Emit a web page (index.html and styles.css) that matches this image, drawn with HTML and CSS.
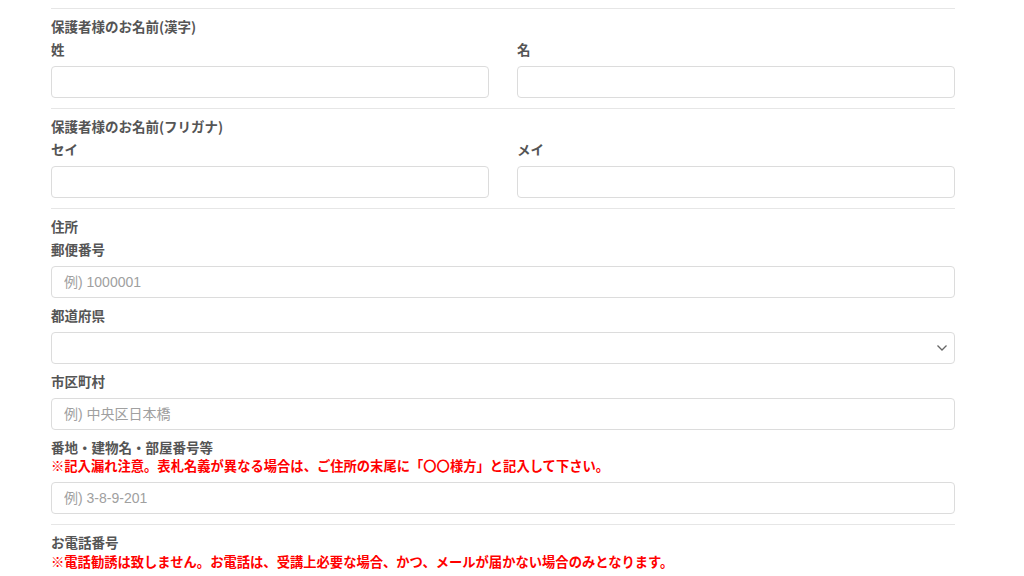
FILE: index.html
```html
<!DOCTYPE html>
<html lang="ja">
<head>
<meta charset="utf-8">
<link rel="stylesheet" href="styles.css">
</head>
<body>
<form class="form">
  <hr class="sep">
  <section class="group">
    <div class="title">保護者様のお名前(漢字)</div>
    <div class="cols">
      <div class="field"><div class="label">姓</div><input class="input" type="text"></div>
      <div class="field"><div class="label">名</div><input class="input" type="text"></div>
    </div>
  </section>
  <hr class="sep">
  <section class="group">
    <div class="title">保護者様のお名前(フリガナ)</div>
    <div class="cols">
      <div class="field"><div class="label">セイ</div><input class="input" type="text"></div>
      <div class="field"><div class="label">メイ</div><input class="input" type="text"></div>
    </div>
  </section>
  <hr class="sep">
  <section class="group">
    <div class="title">住所</div>
    <div class="field"><div class="label">郵便番号</div><input class="input" type="text" placeholder="例) 1000001"></div>
    <div class="field"><div class="label">都道府県</div>
      <div class="select">
        <svg class="chev" width="12" height="8" viewBox="0 0 12 8"><path d="M1.5 1.5 L6 6 L10.5 1.5" fill="none" stroke="#666" stroke-width="1.3"/></svg>
      </div>
    </div>
    <div class="field"><div class="label">市区町村</div><input class="input" type="text" placeholder="例) 中央区日本橋"></div>
    <div class="field"><div class="label label-tight">番地・建物名・部屋番号等</div>
      <div class="note">※記入漏れ注意。表札名義が異なる場合は、ご住所の末尾に「〇〇様方」と記入して下さい。</div>
      <input class="input" type="text" placeholder="例) 3-8-9-201"></div>
  </section>
  <hr class="sep">
  <section class="group">
    <div class="title">お電話番号</div>
    <div class="note">※電話勧誘は致しません。お電話は、受講上必要な場合、かつ、メールが届かない場合のみとなります。</div>
  </section>
</form>
</body>
</html>
```
FILE: styles.css
```css
* { box-sizing: border-box; }
html, body { margin: 0; padding: 0; background: #fff; }
body {
  font-family: "Noto Sans CJK JP", "Noto Sans", sans-serif;
  font-size: 13.5px;
  color: #555;
}
.form {
  width: 904px;
  margin: 0 0 0 51px;
  padding-top: 8px;
}
.sep {
  border: 0;
  border-top: 1px solid #e6e6e6;
  margin: 0;
  height: 0;
}
.group {
  padding: 6px 0 10px;
}
.title, .label {
  font-weight: bold;
  line-height: 22px;
  color: #555;
}
.title { margin-bottom: 1px; }
.cols {
  display: flex;
  gap: 28px;
}
.cols .field { flex: 1; }
.field { display: flex; flex-direction: column; }
.group > .field + .field { margin-top: 6px; }
.label { margin-bottom: 6px; }
.label.label-tight { margin-bottom: 0; }
.note {
  color: #f00;
  font-weight: bold;
  font-size: 13.3px;
  line-height: 16px;
  margin-bottom: 8px;
}
.input, .select {
  display: block;
  width: 100%;
  height: 32px;
  border: 1px solid #dcdcdc;
  border-radius: 4px;
  background: #fff;
  padding: 0 12px;
  font-family: "Liberation Sans", "Noto Sans CJK JP", sans-serif;
  font-size: 14px;
  color: #555;
  outline: none;
}
.input::placeholder { color: #a0a0a0; }
.select {
  display: flex;
  align-items: center;
  justify-content: flex-end;
  padding-right: 6px;
}
.chev { display: block; }
```
